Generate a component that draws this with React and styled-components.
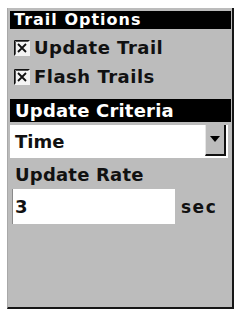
import React from "react";
import styled, { createGlobalStyle } from "styled-components";

const GlobalStyle = createGlobalStyle`
  body {
    margin: 0;
    background: #ffffff;
    font-family: "DejaVu Sans", "Liberation Sans", sans-serif;
  }
`;

const Panel = styled.div`
  box-sizing: border-box;
  width: 227px;
  height: 301px;
  margin: 8px 0 0 7px;
  padding: 3px 1px 0 2px;
  background: #bcbcbc;
  border-left: 1px solid #a8a8a8;
  border-right: 2px solid #161616;
  border-bottom: 2px solid #161616;
  display: flex;
  flex-direction: column;
`;

const HeaderBar = styled.div`
  background: #000;
  color: #fff;
  font-weight: bold;
  font-size: ${(p) => (p.small ? "16px" : "18px")};
  letter-spacing: ${(p) => (p.small ? "1px" : "0.2px")};
  height: ${(p) => (p.small ? "18px" : "23px")};
  line-height: ${(p) => (p.small ? "18px" : "23px")};
  padding-left: ${(p) => (p.small ? "4px" : "5px")};
  margin-top: ${(p) => p.top || "0px"};
  white-space: nowrap;
`;

const CheckList = styled.div`
  padding: 4px 0 0 4px;
  display: flex;
  flex-direction: column;
`;

const CheckRow = styled.div`
  height: 29px;
  display: flex;
  align-items: center;
  gap: 4px;
  font-weight: bold;
  font-size: 18px;
  letter-spacing: 0.5px;
  color: #111;
`;

const Select = styled.div`
  margin: 3px 3px 0 0;
  height: 33px;
  background: #fff;
  display: flex;
  align-items: center;
  justify-content: space-between;
  box-sizing: border-box;
  padding-left: 5px;
  font-weight: bold;
  font-size: 18px;
  color: #111;
`;

const ArrowButton = styled.div`
  box-sizing: border-box;
  align-self: flex-start;
  width: 21px;
  height: 31px;
  margin-right: 2px;
  background: #bcbcbc;
  border-left: 1px solid #e6e6e6;
  border-right: 2px solid #111;
  border-bottom: 2px solid #111;
  display: flex;
  align-items: center;
  justify-content: center;
  padding-bottom: 2px;
`;

const Label = styled.div`
  padding: 6px 0 0 5px;
  height: 31px;
  box-sizing: border-box;
  line-height: 21px;
  font-weight: bold;
  font-size: 18px;
  letter-spacing: 0.2px;
  color: #111;
`;

const InputRow = styled.div`
  display: flex;
  align-items: center;
  gap: 6px;
  padding-left: 2px;
`;

const Input = styled.div`
  width: 163px;
  height: 35px;
  box-sizing: border-box;
  background: #fff;
  border-left: 1px solid #8a8a8a;
  padding-left: 2px;
  display: flex;
  align-items: center;
  font-weight: bold;
  font-size: 18px;
  color: #111;
`;

const Unit = styled.span`
  font-weight: bold;
  font-size: 17px;
  letter-spacing: 1.5px;
  color: #111;
`;

const CheckBox = () => (
  <svg width="16" height="16" viewBox="0 0 16 16">
    <rect x="0" y="0" width="16" height="16" fill="#f4f4f4" />
    <path d="M0.5 15.5V0.5H15.5" stroke="#111" fill="none" />
    <path d="M1.5 14.5V1.5H14.5" stroke="#555" fill="none" />
    <path d="M4 4L12 12M12 4L4 12" stroke="#111" strokeWidth="1.8" />
  </svg>
);

export default function App() {
  return (
    <>
      <GlobalStyle />
      <Panel>
        <HeaderBar small>Trail Options</HeaderBar>
        <CheckList>
          <CheckRow>
            <CheckBox />
            Update Trail
          </CheckRow>
          <CheckRow>
            <CheckBox />
            Flash Trails
          </CheckRow>
        </CheckList>
        <HeaderBar top="8px">Update Criteria</HeaderBar>
        <Select>
          Time
          <ArrowButton>
            <svg width="10" height="6" viewBox="0 0 10 6">
              <path d="M0 0H10L5 6Z" fill="#000" />
            </svg>
          </ArrowButton>
        </Select>
        <Label>Update Rate</Label>
        <InputRow>
          <Input>3</Input>
          <Unit>sec</Unit>
        </InputRow>
      </Panel>
    </>
  );
}
